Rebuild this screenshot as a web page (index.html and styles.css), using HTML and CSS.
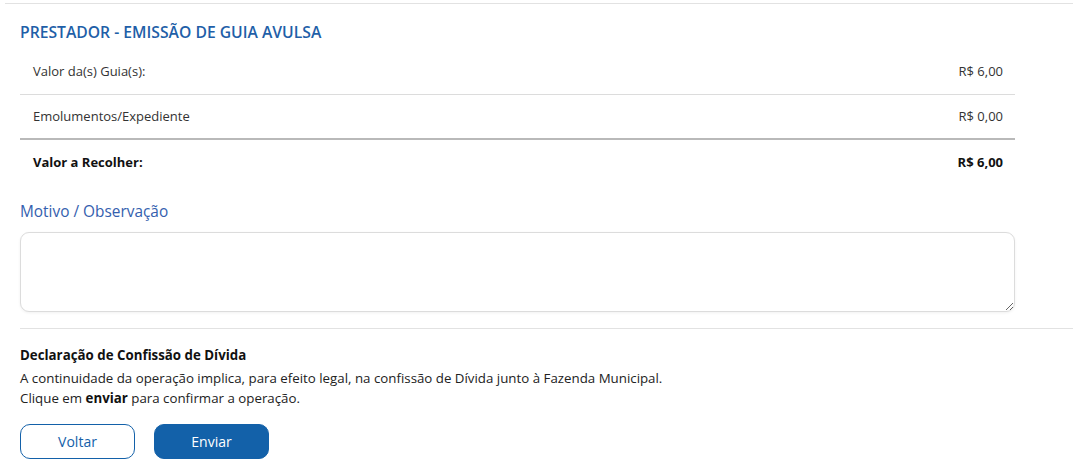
FILE: index.html
```html
<!DOCTYPE html>
<html lang="pt-BR">
<head>
<meta charset="utf-8">
<title>Emissão de Guia Avulsa</title>
<link rel="stylesheet" href="styles.css">
</head>
<body>
<div class="page">
  <section class="panel">
    <h1 class="title">PRESTADOR - EMISSÃO DE GUIA AVULSA</h1>
    <table class="totals">
      <tr class="row">
        <td>Valor da(s) Guia(s):</td>
        <td class="val">R$ 6,00</td>
      </tr>
      <tr class="row row-last">
        <td>Emolumentos/Expediente</td>
        <td class="val">R$ 0,00</td>
      </tr>
      <tr class="row row-total">
        <td>Valor a Recolher:</td>
        <td class="val">R$ 6,00</td>
      </tr>
    </table>
    <label class="field-label" for="obs">Motivo / Observação</label>
    <textarea id="obs" class="obs"></textarea>
  </section>
  <hr class="divider">
  <section class="declaration">
    <h2 class="decl-title">Declaração de Confissão de Dívida</h2>
    <p class="decl-text">A continuidade da operação implica, para efeito legal, na confissão de Dívida junto à Fazenda Municipal.</p>
    <p class="decl-text">Clique em <strong>enviar</strong> para confirmar a operação.</p>
    <div class="actions">
      <button class="btn btn-outline" type="button">Voltar</button>
      <button class="btn btn-primary" type="button">Enviar</button>
    </div>
  </section>
</div>
</body>
</html>
```

FILE: styles.css
```css
* { box-sizing: border-box; }
html, body { margin: 0; padding: 0; background: #fff; }
body {
  font-family: "Open Sans", "Noto Sans", Arial, sans-serif;
  font-size: 13px;
  color: #222;
}
.page {
  margin-top: 3px;
  margin-left: 5px;
  border-top: 1px solid #e2e2e2;
}
.panel {
  padding: 0 0 0 15px;
  width: 1010px;
}
.title {
  margin: 0;
  padding-top: 18px;
  font-size: 15.7px;
  line-height: 20px;
  font-weight: 600;
  color: #1f5fa8;
}
.totals {
  margin-top: 7px;
  width: 995px;
  border-collapse: collapse;
}
.row td {
  height: 45px;
  padding: 0 12px 0 13px;
  color: #333;
  border-bottom: 1px solid #dcdcdc;
  vertical-align: middle;
}
.row-last td { border-bottom: 2px solid #b9b9b9; }
.row-total td {
  border-bottom: none;
  font-weight: 700;
  color: #111;
  height: 44px;
}
.val { text-align: right; }
.field-label {
  display: block;
  margin-top: 18px;
  font-size: 15.4px;
  line-height: 22px;
  color: #3460ae;
}
.obs {
  display: block;
  margin-top: 9px;
  width: 995px;
  height: 80px;
  border: 1px solid #dcdcdc;
  border-radius: 9px;
  box-shadow: 0 1px 3px rgba(0,0,0,0.06);
  resize: vertical;
  font-family: inherit;
}
.divider {
  margin: 16px 0 0 15px;
  border: 0;
  border-top: 1px solid #e2e2e2;
  height: 0;
}
.declaration { padding: 16px 0 0 15px; }
.decl-title {
  margin: 0 0 3px;
  font-size: 13.3px;
  line-height: 20px;
  font-weight: 700;
  color: #111;
}
.decl-text {
  margin: 0;
  font-size: 13.3px;
  line-height: 20px;
  color: #222;
}
.decl-text strong { color: #111; }
.actions {
  display: flex;
  gap: 19px;
  margin-top: 16px;
}
.btn {
  width: 115px;
  height: 35px;
  border-radius: 10px;
  font-family: inherit;
  font-size: 14px;
  cursor: pointer;
}
.btn-outline {
  background: #fff;
  border: 1px solid #1361a9;
  color: #1361a9;
}
.btn-primary {
  background: #1361a9;
  border: 1px solid #1361a9;
  color: #fff;
}
```
